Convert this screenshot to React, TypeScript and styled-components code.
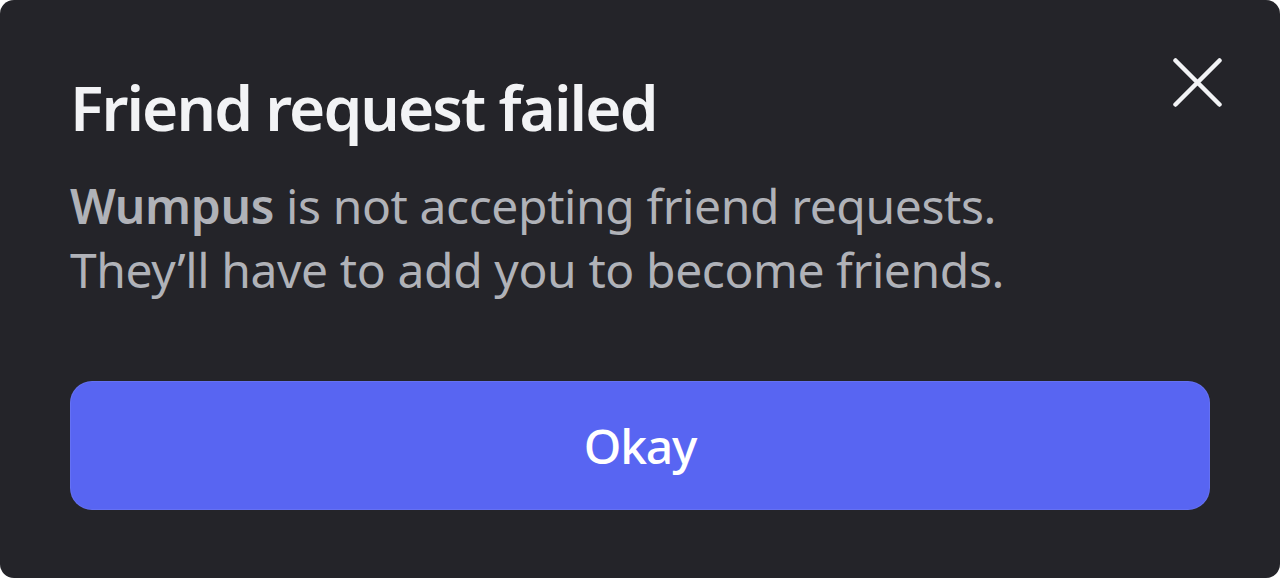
import React from "react";
import styled, { createGlobalStyle } from "styled-components";

const Global = createGlobalStyle`
  html, body { margin: 0; padding: 0; background: #ffffff; }
  body { font-family: "Noto Sans", "Open Sans", sans-serif; }
`;

const Modal = styled.div`
  box-sizing: border-box;
  width: 1280px;
  height: 578px;
  background: #242429;
  border-radius: 14px;
  padding: 67px 70px 0 70px;
  display: flex;
  flex-direction: column;
  overflow: hidden;
`;

const Header = styled.div`
  display: flex;
  justify-content: space-between;
  align-items: flex-start;
`;

const Title = styled.h1`
  margin: 0;
  font-size: 62px;
  line-height: 80px;
  font-weight: 600;
  color: #f2f3f5;
  letter-spacing: -1.9px;
`;

const CloseButton = styled.button`
  background: none;
  border: none;
  padding: 0;
  margin: -9px -12px 0 0;
  width: 49px;
  height: 49px;
  display: flex;
  cursor: pointer;
`;

const Body = styled.p`
  margin: 27px 0 0 0;
  font-size: 48px;
  line-height: 64px;
  font-weight: 400;
  color: #b0b2b8;
  letter-spacing: -0.4px;
`;

const Strong = styled.strong`
  font-weight: 600;
`;

const PrimaryButton = styled.button`
  margin-top: 79px;
  height: 129px;
  width: 100%;
  box-sizing: border-box;
  border-radius: 22px;
  border: 1px solid rgba(255, 255, 255, 0.08);
  background: #5865f2;
  color: #ffffff;
  font-family: "Noto Sans", "Open Sans", sans-serif;
  font-size: 48px;
  font-weight: 500;
  letter-spacing: -1.2px;
  cursor: pointer;
`;

export default function App() {
  return (
    <>
      <Global />
      <Modal>
        <Header>
          <Title>Friend request failed</Title>
          <CloseButton aria-label="Close">
            <svg width="49" height="49" viewBox="0 0 49 49">
              <path
                d="M2.5 2.5 L46.5 46.5 M46.5 2.5 L2.5 46.5"
                stroke="#f2f3f5"
                strokeWidth="4.5"
                strokeLinecap="round"
              />
            </svg>
          </CloseButton>
        </Header>
        <Body>
          <Strong>Wumpus</Strong> is not accepting friend requests.
          <br />
          They’ll have to add you to become friends.
        </Body>
        <PrimaryButton>Okay</PrimaryButton>
      </Modal>
    </>
  );
}
